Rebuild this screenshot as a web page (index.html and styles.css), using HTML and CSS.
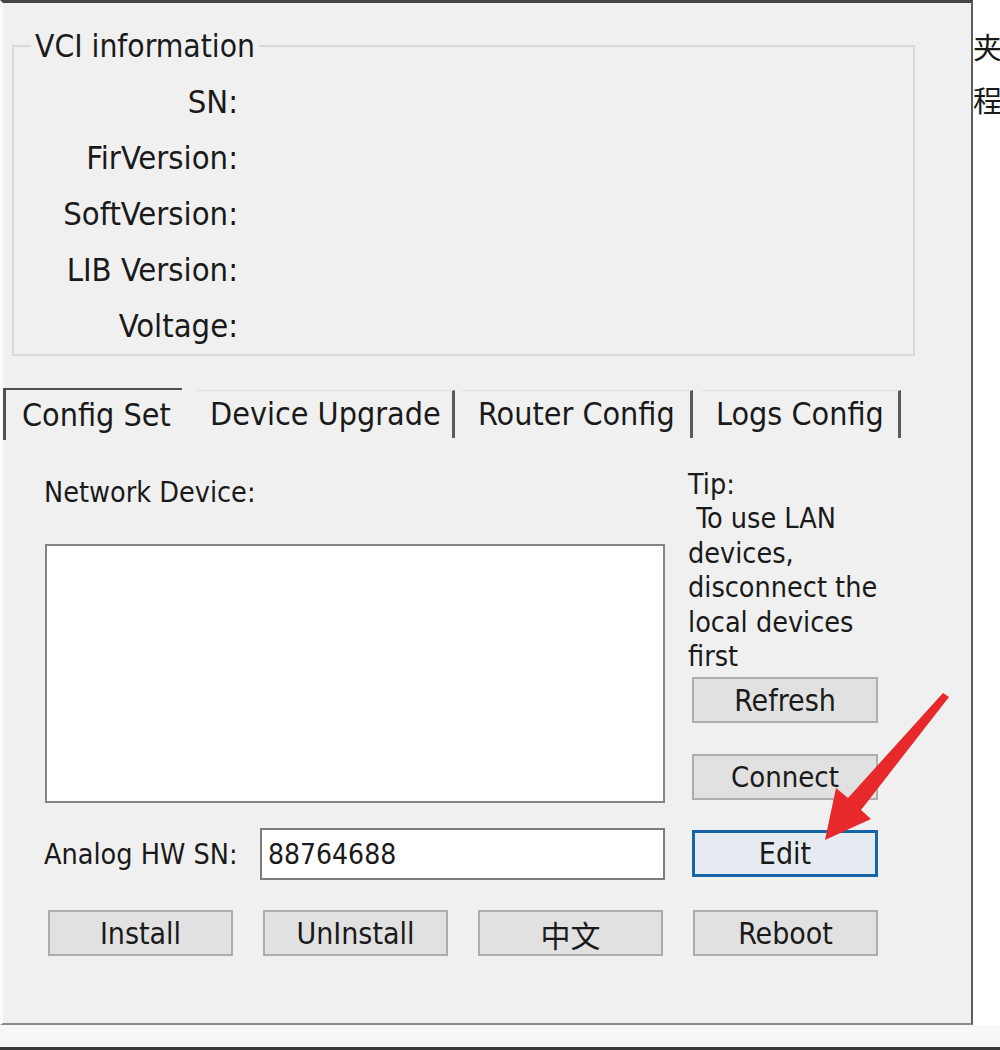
FILE: index.html
```html
<!DOCTYPE html>
<html lang="en">
<head>
    <meta charset="UTF-8">
    <meta name="viewport" content="width=device-width, initial-scale=1.0">
    <title>VCI Config</title>
    <link rel="stylesheet" href="styles.css">
</head>
<body>

    <div class="screen">
        <div class="dialog">

            <fieldset class="vci-info">
                <legend>VCI information</legend>
                <div class="info-row"><span class="info-label">SN:</span></div>
                <div class="info-row"><span class="info-label">FirVersion:</span></div>
                <div class="info-row"><span class="info-label">SoftVersion:</span></div>
                <div class="info-row"><span class="info-label">LIB Version:</span></div>
                <div class="info-row"><span class="info-label">Voltage:</span></div>
            </fieldset>

            <div class="tabs">
                <div class="tab tab-config active">Config Set</div>
                <div class="tab tab-upgrade">Device Upgrade</div>
                <div class="tab tab-router">Router Config</div>
                <div class="tab tab-logs">Logs Config</div>
            </div>

            <div class="panel">
                <div class="device-area">
                    <div class="device-left">
                        <div class="net-label">Network Device:</div>
                        <div class="listbox"></div>
                        <div class="analog-row">
                            <span class="analog-label">Analog HW SN:</span>
                            <input type="text" class="analog-input" value="88764688">
                        </div>
                    </div>
                    <div class="device-right">
                        <div class="tip">Tip:<br>&nbsp;To use LAN<br>devices,<br>disconnect the<br>local devices<br>first</div>
                        <button class="btn btn-refresh">Refresh</button>
                        <button class="btn btn-connect">Connect</button>
                        <button class="btn btn-edit">Edit</button>
                    </div>
                </div>

                <div class="actions">
                    <button class="btn">Install</button>
                    <button class="btn">UnInstall</button>
                    <button class="btn btn-cjk">中文</button>
                    <button class="btn">Reboot</button>
                </div>
            </div>

            <svg class="arrow" width="170" height="170" viewBox="0 0 170 170">
                <polygon points="143,13 149,17 61,130 71,139 25,160 36,108 48,118" fill="#e8292b"/>
            </svg>
        </div>

        <div class="side">夹<br>程</div>
    </div>

    <div class="bottom-strip"></div>

</body>
</html>
```

FILE: styles.css
```css
body {
    margin: 0;
    background-color: #f0f0f0;
    font-family: "DejaVu Sans Condensed", "DejaVu Sans", "Noto Sans CJK SC", sans-serif;
    font-stretch: condensed;
    font-size: 30px;
    color: #1a1a1a;
}

.screen {
    display: flex;
    height: 1025px;
}

.dialog {
    position: relative;
    width: 968px;
    height: 1020px;
    background-color: #f0f0f0;
    border-top: 3px solid #454545;
    border-right: 2px solid #5c5c5c;
    border-bottom: 2px solid #8a8a8a;
    border-left: 3px solid #fbfbfb;
}

.side {
    flex: 1;
    overflow: hidden;
    white-space: nowrap;
    background-color: #fff;
    font-family: "Noto Sans CJK SC", sans-serif;
    font-size: 29px;
    line-height: 53px;
    padding-top: 20px;
}

.bottom-strip {
    height: 22px;
    background-color: #f7f7f7;
    border-bottom: 3px solid #3a3a3a;
}

/* group box */
.vci-info {
    box-sizing: border-box;
    width: 903px;
    margin: 26px 0 0 9px;
    padding: 11px 0 0 0;
    border: 2px solid #dadada;
    font-size: 32.5px;
}

.vci-info legend {
    margin-left: 17px;
    padding: 0 4px;
    line-height: 34px;
    font-size: 31.5px;
}

.info-row {
    display: flex;
    align-items: center;
    height: 56px;
}

.info-label {
    width: 224px;
    text-align: right;
}

/* tabs */
.tabs {
    display: flex;
    margin-top: 32px;
    align-items: flex-start;
    font-size: 32px;
}

.tab {
    box-sizing: border-box;
    height: 48px;
    line-height: 46px;
    margin-top: 2px;
    border-top: 1px solid #e0e0e0;
    border-right: 3px solid #5a5a5a;
    white-space: nowrap;
}

.tab.active {
    height: 52px;
    line-height: 50px;
    margin-top: 0;
    border-top: 2px solid #505050;
    border-left: 3px solid #505050;
    border-right: none;
}

.tab-config {
    width: 179px;
    padding-left: 16px;
}

.tab-upgrade {
    width: 258px;
    margin-left: 15px;
    padding-left: 13px;
}

.tab-router {
    width: 231px;
    margin-left: 7px;
    padding-left: 16px;
}

.tab-logs {
    width: 199px;
    margin-left: 9px;
    padding-left: 14px;
}

/* tab page */
.panel {
    padding: 28px 0 0 41px;
}

.device-area {
    display: grid;
    grid-template-columns: 621px 190px;
    column-gap: 23px;
}

.net-label {
    padding-top: 8px;
    line-height: 34px;
    font-size: 28.5px;
}

.listbox {
    box-sizing: border-box;
    width: 620px;
    height: 259px;
    margin: 34px 0 0 1px;
    background-color: #fff;
    border: 2px solid #858585;
}

.analog-row {
    display: flex;
    align-items: center;
    margin-top: 25px;
}

.analog-label {
    width: 216px;
    font-size: 28.5px;
}

.analog-input {
    box-sizing: border-box;
    width: 405px;
    height: 52px;
    padding: 0 6px;
    border: 2px solid #7d7d7d;
    background-color: #fff;
    font: inherit;
    font-size: 28px;
    color: #1a1a1a;
}

.tip {
    line-height: 34.4px;
    white-space: nowrap;
    font-size: 28.5px;
}

.btn {
    display: block;
    box-sizing: border-box;
    width: 186px;
    height: 46px;
    padding: 0;
    background-color: #e1e1e1;
    border: 2px solid #adadad;
    font: inherit;
    color: #1a1a1a;
    text-align: center;
}

.device-right .btn {
    margin-left: 4px;
}

.btn-refresh {
    margin-top: 3px;
}

.btn-connect {
    margin-top: 31px;
    font-size: 29px;
}

.btn-edit {
    margin-top: 30px;
    height: 47px;
    border: 3px solid #1565a8;
    background-color: #e5ebf1;
}

.actions {
    display: flex;
    gap: 30px;
    margin: 30px 0 0 4px;
}

.actions .btn {
    width: 185px;
}

.btn-cjk {
    font-family: "Noto Sans CJK SC", sans-serif;
}

.arrow {
    position: absolute;
    left: 797px;
    top: 677px;
}
```
